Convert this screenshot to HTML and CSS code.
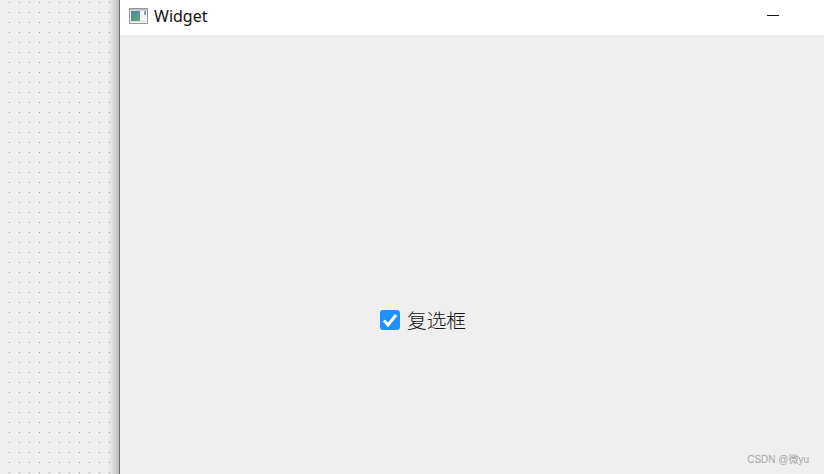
FILE: index.html
```html
<!DOCTYPE html>
<html lang="zh-CN">
<head>
    <meta charset="UTF-8">
    <title>Widget</title>
    <link rel="stylesheet" href="styles.css">
</head>
<body>
    <div class="desk"></div>

    <div class="window">
        <div class="titlebar">
            <svg class="app-icon" width="19" height="16" viewBox="0 0 19 16">
                <defs>
                    <linearGradient id="pane" x1="0" y1="0" x2="1" y2="1">
                        <stop offset="0" stop-color="#4a86a6"/>
                        <stop offset="1" stop-color="#6aa574"/>
                    </linearGradient>
                </defs>
                <rect x="0.5" y="0.5" width="18" height="15" fill="#f2f3f3" stroke="#94989c"/>
                <rect x="1" y="1" width="17" height="1.5" fill="#b9bdc1"/>
                <rect x="2" y="3" width="9" height="10" fill="url(#pane)"/>
                <rect x="15" y="3" width="2" height="4" fill="#7fa4b0"/>
                <rect x="2" y="13" width="15" height="1" fill="#dcdcdc"/>
            </svg>
            <span class="title">Widget</span>
            <span class="minimize"></span>
        </div>

        <div class="client">
            <label class="checkbox">
                <span class="box">
                    <svg width="20" height="20" viewBox="0 0 20 20">
                        <path d="M4 10.5 L8 15 L16 5" fill="none" stroke="#fff" stroke-width="3"/>
                    </svg>
                </span>
                <span class="label-text">复选框</span>
            </label>
        </div>

        <span class="watermark">CSDN @微yu</span>
    </div>
</body>
</html>
```

FILE: styles.css
```css
body {
    margin: 0;
    width: 824px;
    height: 474px;
    display: flex;
    overflow: hidden;
    background-color: #f0f0f0;
    font-family: "Noto Sans", "Noto Sans CJK SC", sans-serif;
}

.desk {
    width: 119px;
    flex-shrink: 0;
    background-color: #f0f0f0;
    background-image:
        linear-gradient(to right, rgba(0, 0, 0, 0) 107px, rgba(0, 0, 0, 0.04) 111px, rgba(0, 0, 0, 0.22) 119px),
        radial-gradient(circle at 9.5px 2.5px, #9a9a9a 0.8px, rgba(0, 0, 0, 0) 1px);
    background-size: 119px 474px, 10px 10px;
}

.window {
    position: relative;
    flex: 1;
    display: flex;
    flex-direction: column;
    border-left: 1px solid #6e6e6e;
    background-color: #efefef;
}

.titlebar {
    height: 35px;
    flex-shrink: 0;
    display: flex;
    align-items: center;
    background-color: #fff;
    padding-left: 9px;
}

.app-icon {
    margin-right: 6px;
    margin-top: -3px;
}

.title {
    font-size: 16px;
    color: #111;
    margin-top: -3px;
}

.minimize {
    width: 12px;
    height: 1px;
    background-color: #111;
    margin-left: auto;
    margin-right: 45px;
    margin-top: -5px;
}

.client {
    flex: 1;
    padding: 275px 0 0 260px;
}

.checkbox {
    display: flex;
    align-items: center;
    gap: 7px;
    height: 20px;
}

.box {
    width: 20px;
    height: 20px;
    border-radius: 3px;
    background-color: #1e90ff;
}

.box svg {
    display: block;
}

.label-text {
    font-family: "Noto Sans CJK SC", sans-serif;
    font-weight: 300;
    font-size: 19.7px;
    color: #111;
    margin-top: -2px;
}

.watermark {
    position: absolute;
    right: 15px;
    bottom: 8px;
    font-family: "Liberation Sans", "Noto Sans CJK SC", sans-serif;
    font-size: 10px;
    color: #a6a6a6;
}
```
